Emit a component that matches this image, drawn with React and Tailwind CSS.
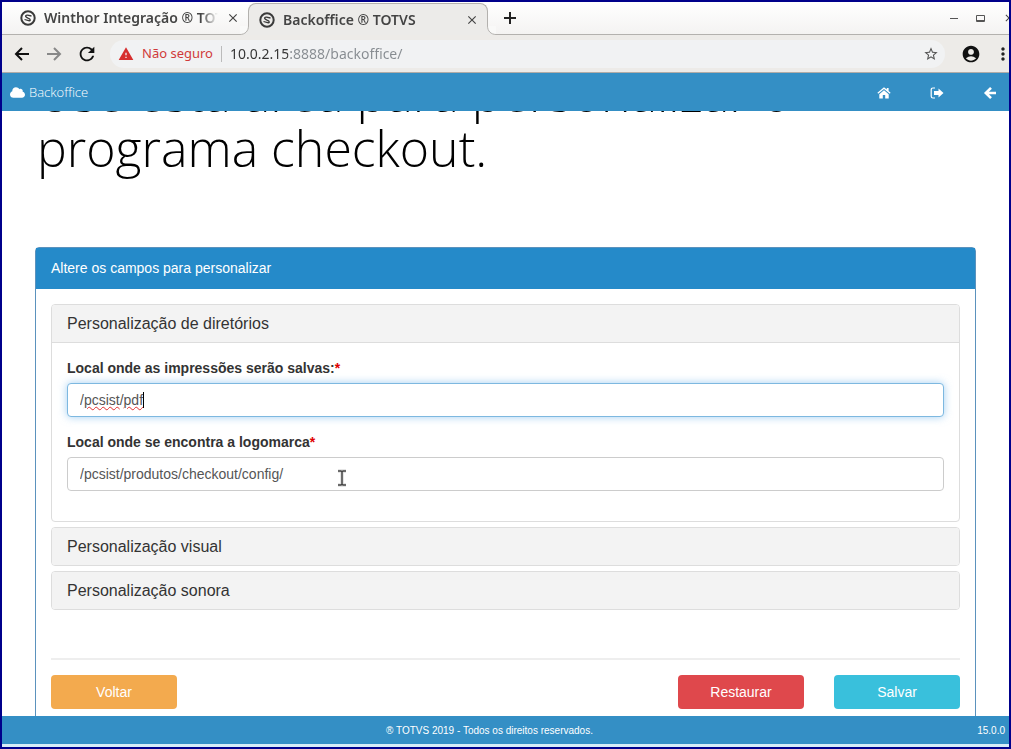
import React from 'react';
import { FaCloud } from 'react-icons/fa';
import { MdAccountCircle, MdClose, MdMoreVert, MdRefresh, MdStarBorder, MdWarning } from 'react-icons/md';

const TotvsIcon = () => (
  <svg viewBox="0 0 16 16" className="size-4 shrink-0" fill="none" stroke="#3a3a3a">
    <circle cx="8" cy="8" r="6.7" strokeWidth="2" />
    <path d="M11.500 6L7.400 5.200Q5.300 5 5.700 6.600Q6 7.400 8 8.200Q10.200 9 10.300 10Q10 11 8.600 10.700L4.500 9.500" strokeWidth="1.300" />
  </svg>
);

const LineIcon = ({ d, className }) => (
  <svg viewBox="0 0 20 20" className={`size-5 ${className}`} fill="none" stroke="currentColor" strokeWidth="2">
    <path d={d} />
  </svg>
);

const HomeIcon = () => (
  <svg viewBox="0 0 14 14" className="size-3.5" fill="currentColor">
    <path d="M7 4.300L2.300 8.200V12.500h3.500V9h2.400v3.500h3.500V8.200z" />
    <path d="M7 1.300L.4 6.800l.8.9L7 2.900l5.800 4.800.8-.9-2-1.700V1.900H9.800v1.700z" />
  </svg>
);

const SignOutIcon = () => (
  <svg viewBox="0 0 14 14" className="size-3.5" fill="none">
    <path d="M5 2H3Q1.200 2 1.200 3.800v6.400Q1.200 12 3 12h2" stroke="currentColor" strokeWidth="1.200" />
    <path d="M8.500 2.500L13.500 7l-5 4.500V9H4V5h4.500z" fill="currentColor" />
  </svg>
);

const ArrowLeftIcon = () => (
  <svg viewBox="0 0 14 14" className="size-3.5" fill="none" stroke="currentColor" strokeWidth="2.600">
    <path d="M8 1.800L2.800 7 8 12.200M3 7h10" />
  </svg>
);

// Curved foot that joins the active tab to the strip line
const TabFoot = ({ className }) => (
  <svg viewBox="0 0 9 9" className={`absolute bottom-0 size-[9px] ${className}`}>
    <path d="M0 0h9v9H0z" fill="#ecebe9" />
    <path d="M0 0h8.500C8.500 5 5 8.500 0 8.500z" fill="#f9f9f8" />
    <path d="M8.500 0C8.500 5 5 8.500 0 8.500" fill="none" stroke="#b3b1ae" />
  </svg>
);

const Tab = ({ title, active }) => (
  <div
    className={`relative flex h-8 w-60 items-center gap-2 pr-2 ${
      active ? '-mb-px rounded-t-lg border border-b-0 border-[#b3b1ae] bg-[#ecebe9] pl-2.5' : 'ml-1.5 pl-3'
    }`}
  >
    {active && <TabFoot className="-left-[9px]" />}
    <TotvsIcon />
    <span className="min-w-0 flex-1 overflow-hidden whitespace-nowrap mask-r-from-90% text-sm font-semibold text-[#444]">
      {title}
    </span>
    <button type="button" aria-label="Fechar guia" className="text-[#444]">
      <MdClose className="size-3.5" />
    </button>
    {active && <TabFoot className="-right-[9px] -scale-x-100" />}
  </div>
);

const BrowserBar = () => (
  <header className="shrink-0 font-['Noto_Sans',sans-serif]">
    <div className="flex h-[33px] items-end border-b border-[#b3b1ae] bg-linear-to-b from-white to-[#f4f3f2]">
      <Tab title="Winthor Integração ® TOTVS" />
      <Tab title="Backoffice ® TOTVS" active />
      <button type="button" aria-label="Nova guia" className="ml-3 flex h-8 items-center text-[#222]">
        <LineIcon d="M10 4v12M4 10h12" />
      </button>
      <div className="ml-auto -mr-1.5 flex h-8 items-center gap-[18px] overflow-hidden text-[#444]">
        <button type="button" aria-label="Minimizar" className="h-px w-2 bg-[#555]" />
        <button type="button" aria-label="Maximizar" className="h-[7px] w-[9px] rounded-[1px] border border-b-2 border-[#555]" />
        <button type="button" aria-label="Fechar">
          <MdClose className="size-3" />
        </button>
      </div>
    </div>

    <div className="flex h-[38px] items-center border-b border-[#b0aca8] bg-[#edebe8] pl-2.5">
      <div className="flex gap-3">
        <button type="button" aria-label="Voltar página" className="text-[#111]">
          <LineIcon d="M17 10H4.500M10 4l-6 6 6 6" />
        </button>
        <button type="button" aria-label="Avançar página" className="text-[#888]">
          <LineIcon d="M3 10h12.500M10 4l6 6-6 6" />
        </button>
        <button type="button" aria-label="Recarregar" className="text-[#111]">
          <MdRefresh className="size-[22px]" />
        </button>
      </div>
      <div className="ml-3 flex h-7 flex-1 items-center rounded-full bg-[#f1f2f3] pl-2 pr-1.5 text-sm">
        <MdWarning className="size-4 text-[#d62f2f]" />
        <span className="ml-2 whitespace-nowrap text-[13px] text-[#d03a3a]">Não seguro</span>
        <span className="mx-2 h-4 w-px bg-[#bbb]" />
        <input
          type="text"
          aria-label="Endereço"
          defaultValue="10.0.2.15:8888/backoffice/"
          className="min-w-0 flex-1 bg-linear-to-r from-[#333] from-[58px] to-[#868b90] to-[58px] bg-clip-text text-transparent outline-none"
        />
        <button type="button" aria-label="Favoritar" className="text-[#555]">
          <MdStarBorder className="size-4" />
        </button>
      </div>
      <button type="button" aria-label="Perfil" className="ml-4 text-[#111]">
        <MdAccountCircle className="size-5" />
      </button>
      <button type="button" aria-label="Menu" className="-mr-1 ml-3 text-[#222]">
        <MdMoreVert className="size-5" />
      </button>
    </div>
  </header>
);

const Navbar = () => (
  <nav className="flex h-[38px] shrink-0 items-center bg-[#348fc5] px-2 pr-3 text-white">
    <a href="#" className="flex items-center gap-1 text-[13px]/5">
      <FaCloud className="size-[15px]" />
      <span className="font-['Open_Sans',sans-serif] font-light">Backoffice</span>
    </a>
    <div className="ml-auto flex gap-[39px] pt-0.5">
      <a href="#" aria-label="Início">
        <HomeIcon />
      </a>
      <a href="#" aria-label="Sair">
        <SignOutIcon />
      </a>
      <a href="#" aria-label="Retornar">
        <ArrowLeftIcon />
      </a>
    </div>
  </nav>
);

const Field = ({ id, label, value, focused, children }) => (
  <div className="mb-[15px]">
    <label htmlFor={id} className="mb-[5px] block text-sm/5 font-bold text-[#333]">
      {label}
      <span className="text-[#e00000]">*</span>
    </label>
    <div className="relative">
      <input
        id={id}
        type="text"
        defaultValue={value}
        className={`block h-[34px] w-full rounded border bg-white px-3 text-sm text-[#555] outline-none ${
          focused ? 'border-[#7db8e0] shadow-[0_0_8px_rgba(102,175,233,0.6)]' : 'border-[#ccc]'
        }`}
      />
      {children}
    </div>
  </div>
);

const Section = ({ title, children }) => (
  <section className="overflow-hidden rounded border border-[#ddd] bg-white">
    <h4>
      <button type="button" className="block h-[37px] w-full bg-[#f3f3f3] px-[15px] text-left text-base text-[#333]">
        {title}
      </button>
    </h4>
    {children && <div className="border-t border-[#ddd] p-[15px]">{children}</div>}
  </section>
);

const TextCursor = () => (
  <svg viewBox="0 0 10 18" className="absolute left-[270px] top-3 h-[18px] w-2.5" fill="none">
    <path d="M1 2h8M5 3v12M1 16h8" stroke="#ddd" strokeWidth="3.500" />
    <path d="M1 2h3l1 1 1-1h3M5 3v12M1 16h3l1-1 1 1h3" stroke="#444" strokeWidth="1.500" />
  </svg>
);

const App = () => {
  return (
    <div className="flex h-screen flex-col overflow-hidden border-2 border-[#00008b] bg-white font-['Liberation_Sans',Arial,sans-serif]">
      <BrowserBar />
      <Navbar />

      <main className="min-h-0 flex-1 overflow-hidden px-[33px]">
        <h1 className="-mt-[45px] mb-[71px] pl-0.5 font-['Open_Sans',sans-serif] text-[50px]/[55px] font-light text-black">
          Use esta área para personalizar o programa checkout.
        </h1>

        <div className="rounded border border-[#5b92bd] bg-white">
          <h3 className="h-[41px] bg-[#258ac9] px-[15px] text-sm/10 text-white">
            Altere os campos para personalizar
          </h3>
          <form className="p-[15px]">
            <div className="flex flex-col gap-[5px]">
              <Section title="Personalização de diretórios">
                <Field id="impressoes" label="Local onde as impressões serão salvas:" value="/pcsist/pdf" focused>
                  {/* spell check marks and caret */}
                  <span
                    aria-hidden="true"
                    className="pointer-events-none absolute inset-y-0 left-[13px] my-auto h-4 border-r border-black text-sm/4 text-transparent"
                  >
                    /
                    <span className="underline decoration-[#e03030] decoration-wavy decoration-1">pcsist</span>/
                    <span className="underline decoration-[#e03030] decoration-wavy decoration-1">pdf</span>
                  </span>
                </Field>
                <Field id="logomarca" label="Local onde se encontra a logomarca" value="/pcsist/produtos/checkout/config/">
                  <TextCursor />
                </Field>
              </Section>
              <Section title="Personalização visual" />
              <Section title="Personalização sonora" />
            </div>

            <hr className="mb-[15px] mt-12 border-t-2 border-[#eee]" />

            <div className="flex gap-[30px] text-sm text-white">
              <button type="button" className="mr-auto h-[34px] w-[126px] rounded bg-[#f3aa4e]">
                Voltar
              </button>
              <button type="button" className="h-[34px] w-[126px] rounded bg-[#df484c]">
                Restaurar
              </button>
              <button type="button" className="h-[34px] w-[126px] rounded bg-[#39c0dc]">
                Salvar
              </button>
            </div>
          </form>
        </div>
      </main>

      <footer className="grid h-[31px] shrink-0 grid-cols-[1fr_auto_1fr] items-center border-b-[3px] border-[#d5ecf8] bg-[#348fc5] px-1 text-[10px] text-white">
        <span />
        <span className="pr-8">® TOTVS 2019 - Todos os direitos reservados.</span>
        <span className="text-right">15.0.0</span>
      </footer>
    </div>
  );
};

export default App;
